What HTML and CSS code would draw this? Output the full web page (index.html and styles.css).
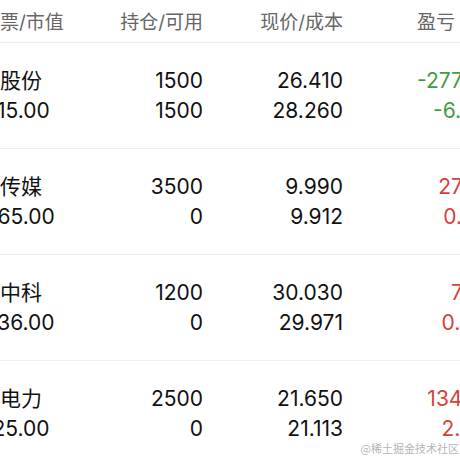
FILE: index.html
```html
<!DOCTYPE html>
<html lang="zh-CN">
<head>
<meta charset="utf-8">
<link rel="stylesheet" href="styles.css">
</head>
<body>
<div class="screen">
  <div class="table">
    <div class="row head">
      <div class="cell left head-first">股票/市值</div>
      <div class="cell right">持仓/可用</div>
      <div class="cell right">现价/成本</div>
      <div class="cell right head-last">盈亏</div>
    </div>
    <div class="row item">
      <div class="cell left"><span>中信股份</span><span>39615.00</span></div>
      <div class="cell right"><span>1500</span><span>1500</span></div>
      <div class="cell right"><span>26.410</span><span>28.260</span></div>
      <div class="cell right down"><span>-2775.00</span><span>-6.55%</span></div>
    </div>
    <div class="row item">
      <div class="cell left"><span>华策传媒</span><span>34965.00</span></div>
      <div class="cell right"><span>3500</span><span>0</span></div>
      <div class="cell right"><span>9.990</span><span>9.912</span></div>
      <div class="cell right up"><span>273.00</span><span>0.79%</span></div>
    </div>
    <div class="row item">
      <div class="cell left"><span>国盾中科</span><span>36036.00</span></div>
      <div class="cell right"><span>1200</span><span>0</span></div>
      <div class="cell right"><span>30.030</span><span>29.971</span></div>
      <div class="cell right up"><span>70.80</span><span>0.20%</span></div>
    </div>
    <div class="row item">
      <div class="cell left"><span>长江电力</span><span>54125.00</span></div>
      <div class="cell right"><span>2500</span><span>0</span></div>
      <div class="cell right"><span>21.650</span><span>21.113</span></div>
      <div class="cell right up"><span>1342.50</span><span>2.54%</span></div>
    </div>
  </div>
  <div class="watermark">@稀土掘金技术社区</div>
</div>
</body>
</html>
```

FILE: styles.css
```css
html, body {
  margin: 0;
  padding: 0;
  background: #ffffff;
}
.screen {
  position: relative;
  width: 460px;
  height: 460px;
  overflow: hidden;
  font-family: "Inter", "Noto Sans CJK SC", sans-serif;
  color: #111111;
}
.table {
  margin-left: -42px;
  width: 549px;
}
.row {
  display: grid;
  grid-template-columns: 140px 105px 140px 164px;
  border-bottom: 1px solid #eeeeee;
}
.head {
  box-sizing: border-box;
  height: 43px;
  padding-top: 3px;
  align-items: center;
  font-size: 19px;
  color: #666666;
}
.head-first {
  padding-left: 23px;
}
.head-last {
  padding-right: 52px;
}
.item {
  padding: 23px 0 22px;
  font-size: 21px;
}
.cell {
  display: flex;
  flex-direction: column;
  line-height: 30px;
  white-space: nowrap;
}
.left {
  align-items: flex-start;
}
.right {
  align-items: flex-end;
}
.down {
  color: #3f9e3f;
}
.up {
  color: #d8413b;
}
.watermark {
  position: absolute;
  right: 1px;
  bottom: 4px;
  font-size: 11px;
  color: #b5b5b5;
  font-family: "Noto Sans CJK SC", sans-serif;
}
```
